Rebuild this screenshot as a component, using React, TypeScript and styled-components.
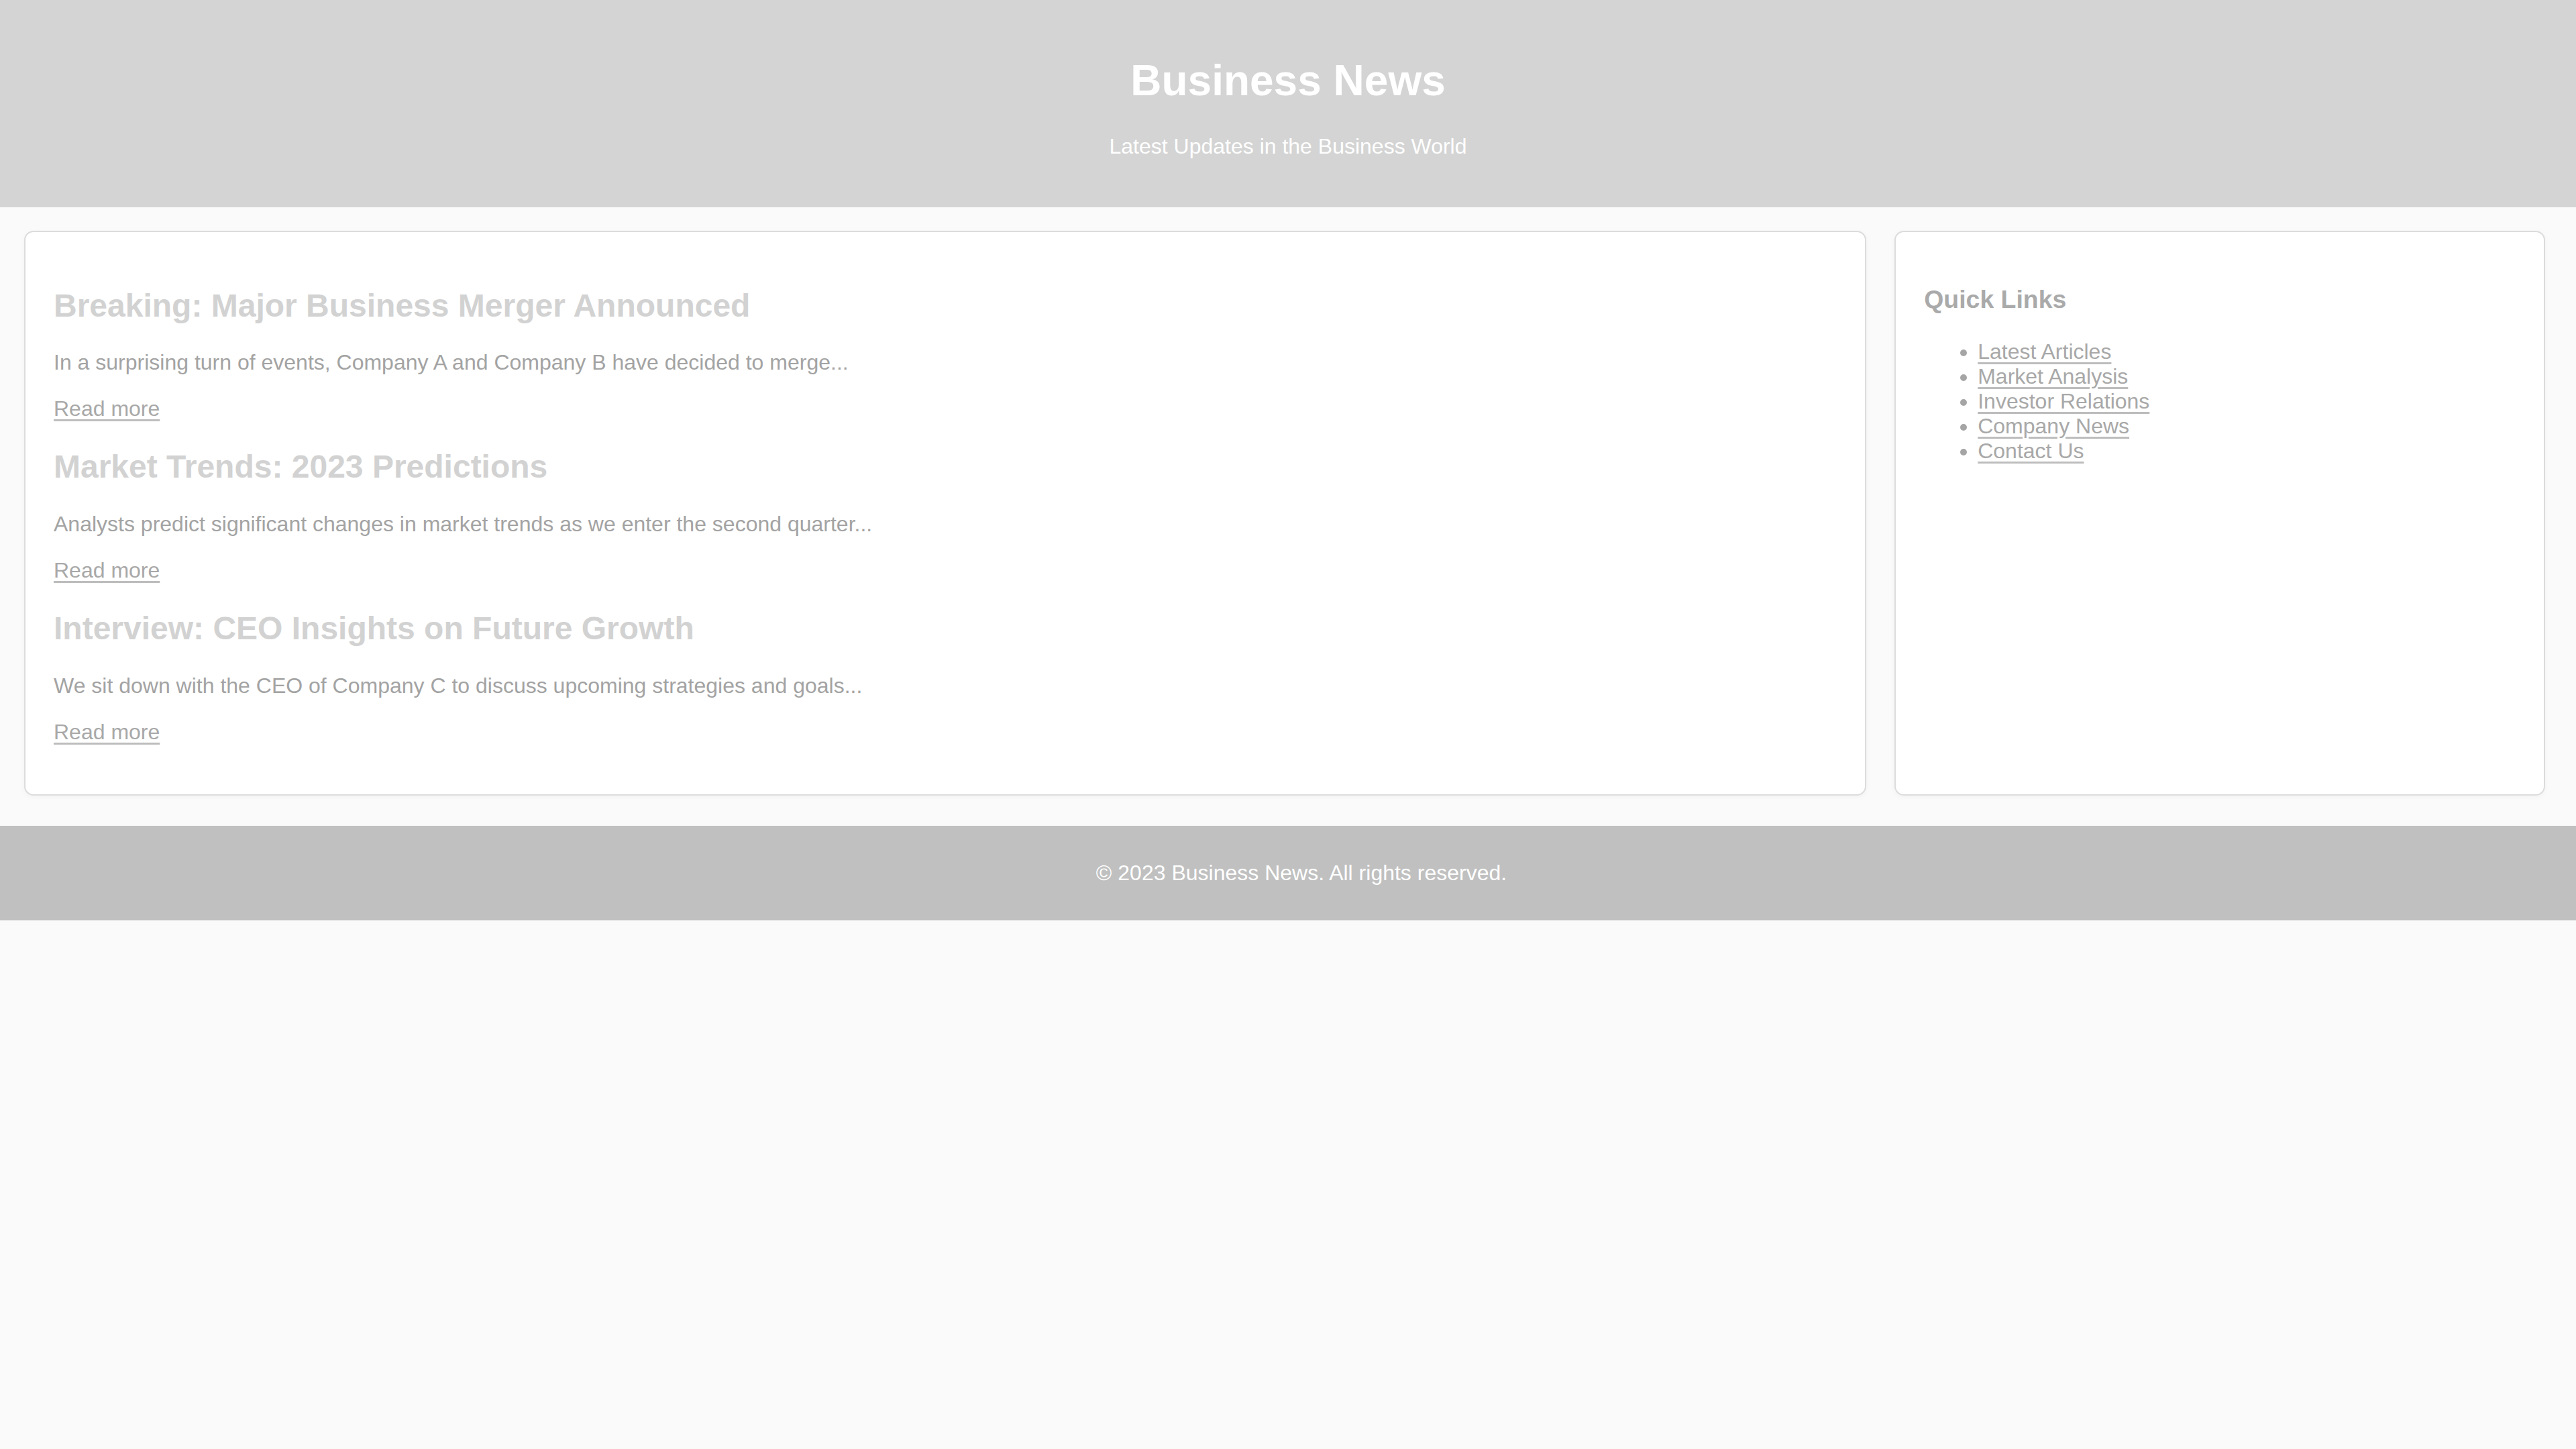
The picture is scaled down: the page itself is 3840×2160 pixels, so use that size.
import React from "react";
import styled, { createGlobalStyle } from "styled-components";

const GlobalStyle = createGlobalStyle`
  html, body {
    margin: 0;
    padding: 0;
    background: #fafafa;
  }
  body {
    font-family: "Liberation Sans", Arial, sans-serif;
    min-height: 100vh;
  }
`;

const Page = styled.div`
  min-height: 100vh;
  background: #fafafa;
  font-family: "Liberation Sans", Arial, sans-serif;
`;

const Header = styled.header`
  background: #d4d4d4;
  color: #ffffff;
  text-align: center;
  padding: 40px;
`;

const SiteTitle = styled.h1`
  font-size: 64px;
  font-weight: bold;
  margin: 42.88px 0;
`;

const Tagline = styled.p`
  font-size: 32px;
  margin: 32px 0;
`;

const Layout = styled.div`
  display: flex;
  align-items: stretch;
  gap: 42px;
  padding: 35px 46px 45px 36px;
`;

const Card = styled.section<{ $grow: number }>`
  flex: ${(p) => p.$grow} 1 0;
  background: #ffffff;
  border: 2px solid #dcdcdc;
  border-radius: 14px;
  box-shadow: 0 2px 8px rgba(0, 0, 0, 0.035);
  padding: 42px 40px 42px 42px;
`;

const Article = styled.article``;

const ArticleTitle = styled.h2`
  font-size: 48px;
  font-weight: bold;
  color: #d2d2d2;
  margin: 39.84px 0;
`;

const Excerpt = styled.p`
  font-size: 32px;
  color: #a3a3a3;
  margin: 32px 0;
`;

const MoreLink = styled.a`
  color: #a8a8a8;
  text-decoration: underline;
  text-decoration-color: #bdbdbd;
  text-decoration-thickness: 3px;
  text-underline-offset: 5px;
`;

const SideTitle = styled.h3`
  font-size: 37.44px;
  font-weight: bold;
  color: #aaaaaa;
  margin: 37.44px 0;
`;

const LinkList = styled.ul`
  margin: 32px 0;
  padding-left: 80px;
  list-style: disc;
  color: #a5a5a5;
  font-size: 32px;
`;

const LinkItem = styled.li`
  line-height: normal;
`;

const SideLink = styled.a`
  color: #a8a8a8;
  text-decoration: underline;
  text-decoration-color: #bdbdbd;
  text-decoration-thickness: 3px;
  text-underline-offset: 5px;
`;

const Footer = styled.footer`
  background: #c0c0c0;
  color: #ffffff;
  text-align: center;
  padding: 20px 0 20px 40px;
`;

const FooterText = styled.p`
  font-size: 32px;
  margin: 32px 0;
`;

const articles = [
  {
    title: "Breaking: Major Business Merger Announced",
    text: "In a surprising turn of events, Company A and Company B have decided to merge...",
  },
  {
    title: "Market Trends: 2023 Predictions",
    text: "Analysts predict significant changes in market trends as we enter the second quarter...",
  },
  {
    title: "Interview: CEO Insights on Future Growth",
    text: "We sit down with the CEO of Company C to discuss upcoming strategies and goals...",
  },
];

const links = [
  "Latest Articles",
  "Market Analysis",
  "Investor Relations",
  "Company News",
  "Contact Us",
];

export default function App() {
  return (
    <Page>
      <GlobalStyle />
      <Header>
        <SiteTitle>Business News</SiteTitle>
        <Tagline>Latest Updates in the Business World</Tagline>
      </Header>
      <Layout>
        <Card $grow={3.01}>
          {articles.map((a) => (
            <Article key={a.title}>
              <ArticleTitle>{a.title}</ArticleTitle>
              <Excerpt>{a.text}</Excerpt>
              <Excerpt>
                <MoreLink href="#">Read more</MoreLink>
              </Excerpt>
            </Article>
          ))}
        </Card>
        <Card $grow={1}>
          <SideTitle>Quick Links</SideTitle>
          <LinkList>
            {links.map((l) => (
              <LinkItem key={l}>
                <SideLink href="#">{l}</SideLink>
              </LinkItem>
            ))}
          </LinkList>
        </Card>
      </Layout>
      <Footer>
        <FooterText>© 2023 Business News. All rights reserved.</FooterText>
      </Footer>
    </Page>
  );
}
